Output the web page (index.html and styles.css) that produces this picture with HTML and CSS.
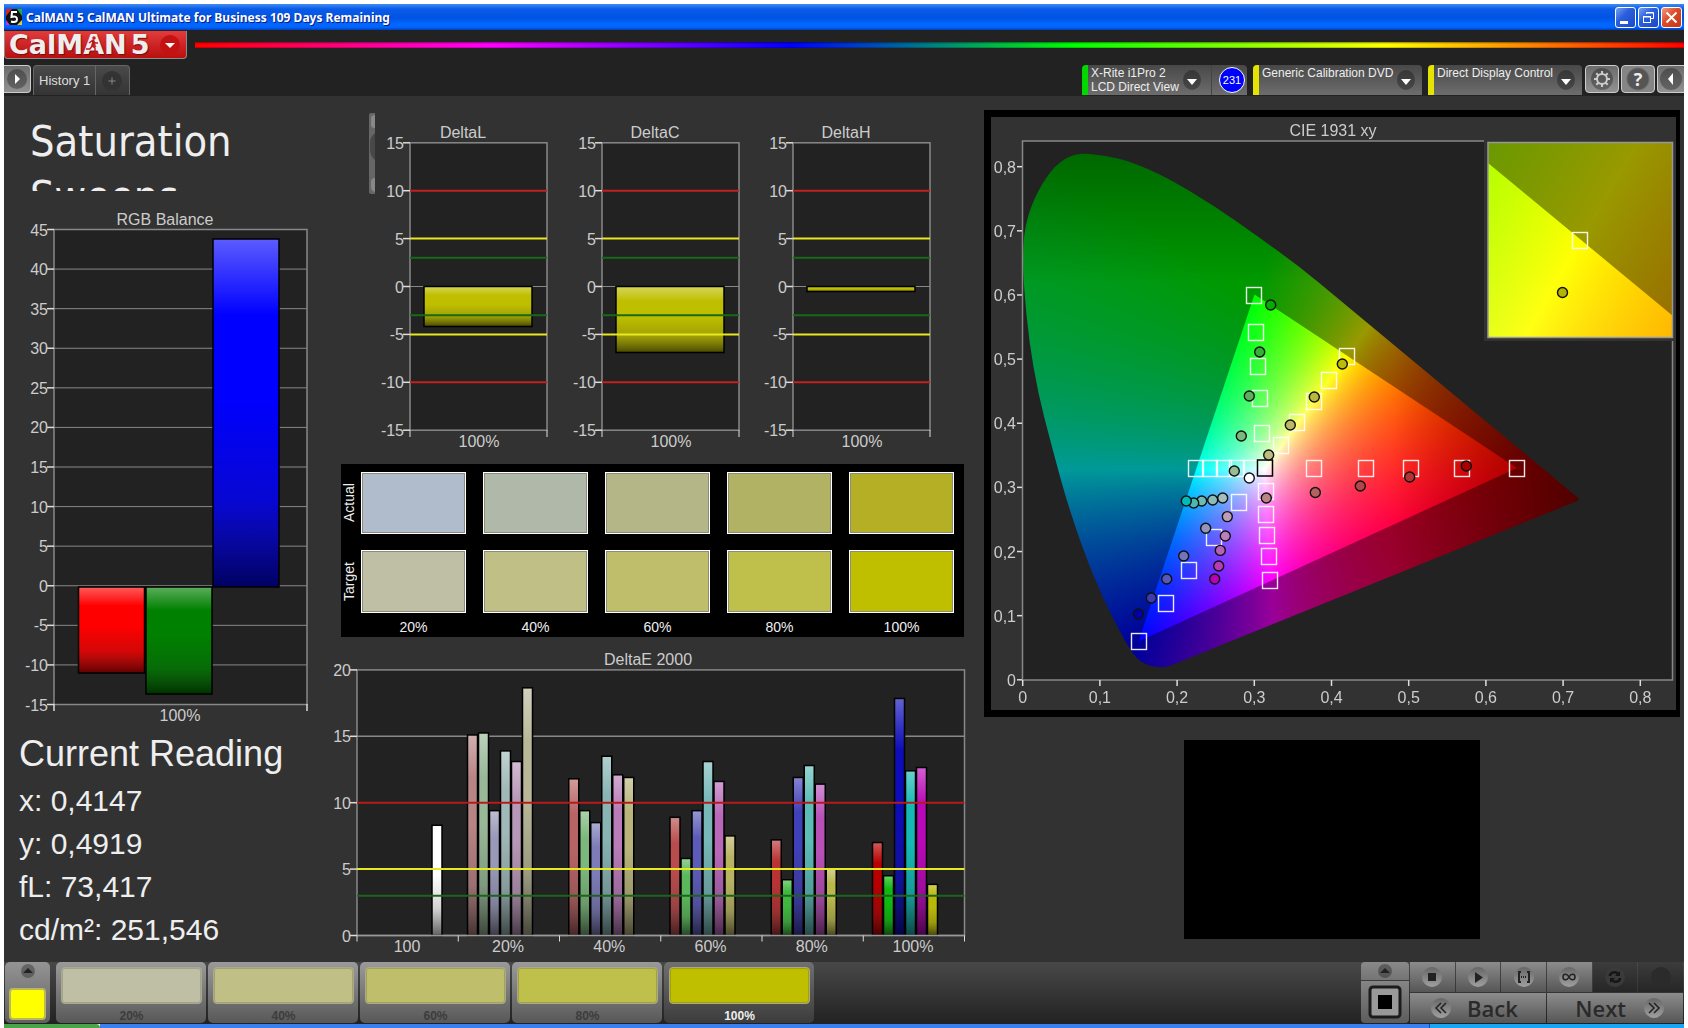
FILE: index.html
```html
<!DOCTYPE html>
<html lang="en">
<head>
<meta charset="utf-8">
<title>CalMAN 5</title>
<link rel="stylesheet" href="styles.css">
</head>
<body>
<div class="app">
  <header class="titlebar">
    <svg class="app-icon" width="16" height="16" viewBox="0 0 16 16" aria-hidden="true">
      <rect width="16" height="16" fill="#111"/>
      <path d="M0 0h6L0 7z" fill="#d22"/><path d="M16 0v7L11 0z" fill="#2a4"/><path d="M0 16v-5l4 5z" fill="#c3c"/><path d="M16 16h-5l5-5z" fill="#dc3"/>
      <path d="M11 3H6L5.500 8c4-1 5.500 0 5.500 2.500S8 13.500 5 12.500" fill="none" stroke="#fff" stroke-width="2"/>
    </svg>
    <h1 class="window-title">CalMAN 5 CalMAN Ultimate for Business 109 Days Remaining</h1>
    <div class="window-buttons">
      <button class="win-btn" aria-label="Minimize"><svg width="19" height="19" viewBox="0 0 19 19"><rect x="4" y="13" width="8" height="3" fill="#fff"/></svg></button>
      <button class="win-btn" aria-label="Restore"><svg width="19" height="19" viewBox="0 0 19 19" fill="none" stroke="#fff"><path d="M7.500 6V4.500h7v6H12M7.500 5h7"/><rect x="4.500" y="8.500" width="7" height="6"/><path d="M4 9h8"/></svg></button>
      <button class="win-btn close" aria-label="Close"><svg width="19" height="19" viewBox="0 0 19 19" stroke="#fff" stroke-width="2"><path d="M4.500 4.500l10 10M14.500 4.500l-10 10"/></svg></button>
    </div>
  </header>

  <div class="brandbar">
    <button class="logo" aria-label="CalMAN 5 menu">
      <span class="logo-text">CalMAN</span><span class="logo-text">5</span>
      <svg class="runner" width="16" height="18" viewBox="0 0 16 18" fill="none" stroke="#c11b1b" stroke-width="1.500" aria-hidden="true"><circle cx="9" cy="3" r="1" fill="#c11b1b"/><path d="M4 8l4-3 2 3 3 0M8 6l-1 5 3 2 0 4M7 11l-2 3-4 0"/></svg>
      <svg width="22" height="22" viewBox="0 0 22 22" aria-hidden="true"><circle cx="11" cy="11" r="10" fill="#c41212"/><path d="M6 9h10l-5 5z" fill="#fff"/></svg>
    </button>
    <div class="rainbow"></div>
  </div>

  <nav class="tabbar">
    <button class="square-btn left-edge" aria-label="Expand"><svg width="22" height="22" viewBox="0 0 22 22"><circle cx="11" cy="11" r="10" class="knob"/><path d="M9 6v10l5-5z" fill="#fff"/></svg></button>
    <div class="history">
      <button class="tab">History 1</button>
      <button class="tab add" aria-label="Add history"><svg width="20" height="20" viewBox="0 0 20 20"><circle cx="10" cy="10" r="10" fill="#333"/><path d="M6.500 10h7M10 6.500v7" stroke="#888"/></svg></button>
    </div>
    <div class="devices">
      <div class="device meter">
        <button class="device-main">X-Rite i1Pro 2<br>LCD Direct View</button>
        <svg class="arrow meter-arrow" width="18" height="20" viewBox="0 0 18 20"><ellipse cx="9" cy="10" rx="9" ry="10" class="knob"/><path d="M4 9h10l-5 6z" fill="#fff"/></svg>
        <span class="badge">231</span>
      </div>
      <div class="device source">
        <select aria-label="Source"><option>Generic Calibration DVD</option></select>
        <svg class="arrow" width="18" height="20" viewBox="0 0 18 20"><ellipse cx="9" cy="10" rx="9" ry="10" class="knob"/><path d="M4 9h10l-5 6z" fill="#fff"/></svg>
      </div>
      <div class="device display">
        <select aria-label="Display"><option>Direct Display Control</option></select>
        <svg class="arrow" width="18" height="20" viewBox="0 0 18 20"><ellipse cx="9" cy="10" rx="9" ry="10" class="knob"/><path d="M4 9h10l-5 6z" fill="#fff"/></svg>
      </div>
      <button class="square-btn" aria-label="Settings"><svg width="24" height="24" viewBox="0 0 24 24"><circle cx="12" cy="12" r="11" class="knob"/><circle cx="12" cy="12" r="5" fill="none" stroke="#ccc" stroke-width="2"/><path d="M12 4v3M12 17v3M4 12h3M17 12h3M6.300 6.300l2.200 2.200M15.500 15.500l2.200 2.200M17.700 6.300l-2.200 2.200M8.500 15.500l-2.200 2.200" stroke="#ccc" stroke-width="2"/></svg></button>
      <button class="square-btn help" aria-label="Help">?</button>
      <button class="square-btn right-edge" aria-label="Collapse"><svg width="24" height="24" viewBox="0 0 24 24"><circle cx="12" cy="12" r="11" class="knob"/><path d="M14 6v12l-5-6z" fill="#fff"/></svg></button>
    </div>
  </nav>

  <main class="workspace">
    <section class="col">
      <div class="heading-box"><h2 class="page-heading">Saturation Sweeps</h2></div>
      <svg id="rgb" class="chart" viewBox="4 200 336 532" role="img" aria-label="RGB Balance"></svg>
      <div class="reading">
        <h3>Current Reading</h3>
        <p>x: 0,4147</p>
        <p>y: 0,4919</p>
        <p>fL: 73,417</p>
        <p>cd/m²: 251,546</p>
      </div>
    </section>

    <section class="col">
      <svg id="deltas" class="chart" viewBox="340 96 640 368" role="img" aria-label="DeltaL, DeltaC, DeltaH"></svg>
      <div class="swatches">
        <div class="swatch-side">Actual</div>
        <div class="swatch" style="background:#b0bccc"></div>
        <div class="swatch" style="background:#b0b9a9"></div>
        <div class="swatch" style="background:#b4b688"></div>
        <div class="swatch" style="background:#b2b265"></div>
        <div class="swatch" style="background:#b5af26"></div>
        <div class="swatch-side">Target</div>
        <div class="swatch" style="background:#bfbfa6"></div>
        <div class="swatch" style="background:#bfbf86"></div>
        <div class="swatch" style="background:#bebe6b"></div>
        <div class="swatch" style="background:#bfbf4c"></div>
        <div class="swatch" style="background:#bfbf00"></div>
        <span></span>
        <span class="swatch-label">20%</span><span class="swatch-label">40%</span><span class="swatch-label">60%</span><span class="swatch-label">80%</span><span class="swatch-label">100%</span>
      </div>
      <svg id="deltae" class="chart" viewBox="340 637 640 325" role="img" aria-label="DeltaE 2000"></svg>
    </section>

    <section class="col">
      <div class="cie">
        <canvas id="cie-color" width="704" height="644"></canvas>
        <svg id="cie" class="chart overlay" viewBox="980 96 704 644" role="img" aria-label="CIE 1931 xy"></svg>
      </div>
      <div class="preview"></div>
    </section>
  </main>

  <footer class="bottombar">
    <button class="pattern-btn" aria-label="Pattern">
      <svg width="16" height="16" viewBox="0 0 16 16"><circle cx="8" cy="8" r="7" class="knob"/><path d="M3 10l5-5 5 5z" fill="#222"/></svg>
      <span class="pattern-color"></span>
    </button>
    <div class="slots">
      <button class="slot"><span class="slot-color" style="background:#bfbfa6"></span>20%</button>
      <button class="slot"><span class="slot-color" style="background:#bfbf86"></span>40%</button>
      <button class="slot"><span class="slot-color" style="background:#bfbf6b"></span>60%</button>
      <button class="slot"><span class="slot-color" style="background:#bfbf4c"></span>80%</button>
      <button class="slot selected"><span class="slot-color" style="background:#bfbf00"></span>100%</button>
    </div>
    <div class="transport">
      <div class="window-pattern">
        <button class="wp-top" aria-label="Raise"><svg width="16" height="16" viewBox="0 0 16 16"><circle cx="8" cy="8" r="7" class="knob"/><path d="M3 10l5-5 5 5z" fill="#222"/></svg></button>
        <button class="wp-main" aria-label="Window pattern"><svg width="34" height="34" viewBox="0 0 34 34"><rect x="2" y="2" width="30" height="30" rx="3" fill="#999" stroke="#1c1c1c" stroke-width="3"/><rect x="10" y="10" width="14" height="14" fill="#000"/></svg></button>
      </div>
      <div class="controls">
        <button class="ctl" aria-label="Stop"><svg width="22" height="22" viewBox="0 0 22 22"><circle cx="11" cy="11" r="10" class="glow"/><rect x="7" y="7" width="8" height="8" fill="#222"/></svg></button>
        <button class="ctl" aria-label="Play"><svg width="22" height="22" viewBox="0 0 22 22"><circle cx="11" cy="11" r="10" class="glow"/><path d="M8 6v11l8-5.500z" fill="#222"/></svg></button>
        <button class="ctl" aria-label="Read series"><svg width="22" height="22" viewBox="0 0 22 22"><circle cx="11" cy="11" r="10" class="glow"/><path d="M8 6H6v10h2M14 6h2v10h-2" fill="none" stroke="#222" stroke-width="2"/><path d="M8 11h6" stroke="#222" stroke-width="2" stroke-dasharray="1 1"/></svg></button>
        <button class="ctl" aria-label="Read continuous"><svg width="22" height="22" viewBox="0 0 22 22"><circle cx="11" cy="11" r="10" class="glow"/><path d="M11 11c-2-4-6-3.500-6 0s4 4 6 0c2-4 6-3.500 6 0s-4 4-6 0z" fill="none" stroke="#222" stroke-width="1.500"/></svg></button>
        <button class="ctl dark" aria-label="Refresh"><svg width="22" height="22" viewBox="0 0 22 22"><circle cx="11" cy="11" r="10" fill="#3a3a3a"/><path d="M6 10c0-4 6-5 8-2M16 12c0 4-6 5-8 2" fill="none" stroke="#161616" stroke-width="2.500"/><path d="M16 5v5h-5zM6 17v-5h5z" fill="#161616"/></svg></button>
        <button class="ctl dark" aria-label="Record"><svg width="22" height="22" viewBox="0 0 22 22"><circle cx="11" cy="11" r="10" fill="#2b2b2b"/></svg></button>
        <button class="nav-btn"><svg width="22" height="22" viewBox="0 0 22 22"><circle cx="11" cy="11" r="10" class="glow"/><path d="M11 6l-5 5 5 5M16 6l-5 5 5 5" fill="none" stroke="#222" stroke-width="1.500"/></svg><span>Back</span></button>
        <button class="nav-btn next"><span>Next</span><svg width="22" height="22" viewBox="0 0 22 22"><circle cx="11" cy="11" r="10" class="glow"/><path d="M6 6l5 5-5 5M11 6l5 5-5 5" fill="none" stroke="#222" stroke-width="1.500"/></svg></button>
      </div>
    </div>
  </footer>
  <div class="taskbar"><span class="start"></span><span class="tasks"></span><span class="tray"></span></div>
</div>
<svg width="0" height="0" class="defs" aria-hidden="true">
  <defs>
    <linearGradient id="shade" x1="0" y1="0" x2="0" y2="1">
      <stop offset="0" stop-color="#fff" stop-opacity=".36"/>
      <stop offset=".22" stop-color="#fff" stop-opacity="0"/>
      <stop offset=".45" stop-color="#222" stop-opacity="0"/>
      <stop offset=".75" stop-color="#222" stop-opacity=".2"/>
      <stop offset="1" stop-color="#000" stop-opacity=".62"/>
    </linearGradient>
    <linearGradient id="knob-light" x1="0" y1="0" x2="0" y2="1">
      <stop offset="0" stop-color="#666"/>
      <stop offset="1" stop-color="#a0a0a0"/>
    </linearGradient>
  </defs>
</svg>
<script src="charts.js"></script>
</body>
</html>
```
FILE: styles.css
```css
* { box-sizing: border-box; }
body { margin: 0; background: #fff; font-family: "Liberation Sans", Arial, sans-serif; color: #eee; }
button, select { font-family: inherit; border: 0; margin: 0; padding: 0; color: inherit; cursor: pointer; }
h1, h2, h3, p { margin: 0; font-weight: normal; }
svg { display: block; flex: none; }
.defs { position: absolute; }
.knob { fill: #000; fill-opacity: .3; }
.glow { fill: url(#knob-light); }

.app { display: flex; flex-direction: column; min-height: 100vh; padding: 4px 4px 0; }

.titlebar { display: flex; align-items: center; height: 26px; padding: 0 2px; gap: 4px;
  background: linear-gradient(#3f8cf3 0, #0a5be8 5px, #0054e3 14px, #0066ff 20px, #0066ff 23px, #0040c0 26px); }
.window-title { flex: 1; font: bold 12px "Noto Sans", sans-serif; color: #fff; text-shadow: 1px 1px #0a1883; }
.window-buttons { display: flex; gap: 2px; }
.win-btn { width: 21px; height: 21px; border: 1px solid #fff; border-radius: 3px; background: linear-gradient(135deg, #7ba2f0, #2a5fdc 40%, #1c49c8); }
.win-btn.close { background: linear-gradient(135deg, #ee9a84, #dc4a26 45%, #c3371a); }

.brandbar { display: flex; align-items: flex-start; gap: 8px; height: 35px; padding-top: 1px; background: #222; }
.logo { display: flex; align-items: center; gap: 4px; width: 183px; height: 28px; padding: 0 4px; overflow: hidden; position: relative;
  border: 1px solid #8b8b8b; border-top: 0; border-radius: 0 0 4px 4px; background: linear-gradient(#e23b3b, #b80f0f); }
.logo-text { font: bold 27px/26px "DejaVu Sans", sans-serif; color: #eee; text-shadow: 1px 1px 1px #701010; }
.runner { position: absolute; left: 80px; top: 4px; }
.logo svg:last-child { margin-left: 6px; }
.rainbow { flex: 1; height: 6px; margin-top: 11px;
  background: linear-gradient(rgba(0,0,0,.45) 0, rgba(0,0,0,0) 2px 5px, rgba(0,0,0,.4) 6px),
  linear-gradient(90deg, #f00, #f0f 20%, #00f 40%, #0f0 59%, #ff0 80%, #f00); }

.tabbar { display: flex; align-items: flex-start; height: 31px; background: #222; }
.square-btn { display: flex; align-items: center; justify-content: center; width: 34px; height: 28px; border: 1px solid #ccc; border-radius: 4px; background: linear-gradient(#6c6c6c, #929292); }
.left-edge { width: 27px; border-left: 0; border-radius: 0 4px 4px 0; }
.right-edge { width: 27px; border-right: 0; border-radius: 4px 0 0 4px; }
.help { font: bold 18px "Open Sans", sans-serif; color: #eee; background: radial-gradient(circle, #555 10px, #858585 12px); }
.history { display: flex; margin-left: 2px; height: 30px; border: 1px solid #666; border-bottom: 0; border-radius: 4px 4px 0 0; background: linear-gradient(#4a4a4a, #343434); }
.tab { padding: 0 5px; background: none; font-size: 13px; color: #ddd; }
.tab.add { width: 34px; padding-left: 6px; border-left: 1px solid #666; }
.devices { display: flex; align-items: flex-start; gap: 2px; margin-left: auto; }
.device { position: relative; display: flex; height: 30px; margin-right: 4px; border-left: 6px solid #e4e400; border-radius: 4px 4px 0 0; background: linear-gradient(#484848, #6d6d6d); }
.device.meter { width: 165px; border-left-color: #00d800; }
.device.source { width: 169px; }
.device.display { width: 154px; margin-right: 1px; }
.device-main { width: 124px; padding: 1px 3px; border-right: 1px solid #444; background: none; text-align: left; font-size: 12px; line-height: 14px; }
.device select { flex: 1; appearance: none; padding: 0 0 13px 3px; background: none; font-size: 12px; line-height: 17px; }
.arrow { position: absolute; right: 7px; top: 5px; pointer-events: none; }
.meter-arrow { right: 46px; }
.badge { width: 26px; height: 26px; margin: 2px 0 0 7px; border: 1px solid #fff; border-radius: 50%; background: #00f; color: #fff; font-size: 11px; line-height: 24px; text-align: center; }

.workspace { flex: 1; display: grid; grid-template-columns: 336fr 640fr 704fr; background: #323232; }
.col { display: flex; flex-direction: column; min-width: 0; }
.chart { width: 100%; height: auto; overflow: visible; font-size: 16px; fill: #ccc; }
.heading-box { height: 95px; margin-bottom: 9px; padding: 18px 60px 0 26px; overflow: hidden; }
.page-heading { font: 43px/55px "DejaVu Sans Condensed", "DejaVu Sans", sans-serif; font-stretch: condensed; color: #eee; }
.reading { padding: 0 15px; }
.reading h3 { margin-bottom: 4px; font-size: 36px; line-height: 43px; }
.reading p { font-size: 30px; line-height: 43px; }

.swatches { display: grid; grid-template-columns: 3px repeat(5, 1fr); grid-template-rows: 62px 63px 16px; gap: 16px 17px;
  height: 173px; margin: 0 16px 0 1px; padding: 8px 10px 0 0; background: #000; }
.swatch { border: 1px solid #fff; box-shadow: inset 0 0 0 1px #8c8c78; }
.swatch-side { width: 16px; writing-mode: vertical-rl; transform: rotate(180deg); text-align: center; font-size: 14px; line-height: 16px; }
.swatch-label { margin-top: -10px; text-align: center; font-size: 14px; line-height: 16px; }

.cie { position: relative; }
.cie canvas { display: block; width: 100%; height: auto; }
.overlay { position: absolute; left: 0; top: 0; }
.preview { width: 42%; aspect-ratio: 296 / 199; margin-left: 29%; background: #000; }

.bottombar { display: flex; align-items: stretch; height: 62px; padding: 0 1px 1px; background: linear-gradient(#484848, #222); color: #3c3c3c; }
.pattern-btn { display: flex; flex-direction: column; align-items: center; gap: 9px; width: 45px; padding-top: 1px; border-radius: 5px; background: linear-gradient(#949494, #606060); }
.pattern-color { width: 37px; height: 32px; border: 2px solid #b9b95a; border-radius: 4px; background: #ff0; }
.slots { display: flex; gap: 2px; margin-left: 6px; }
.slot { display: flex; flex-direction: column; gap: 5px; width: 150px; padding: 5px 4px 0 5px; border-radius: 5px; background: linear-gradient(#9a9a9a, #585858); font-size: 12px; font-weight: bold; line-height: 14px; }
.slot-color { align-self: stretch; height: 37px; border: 1px solid #aaa98c; border-radius: 4px; box-shadow: inset 0 0 0 1px rgba(0,0,0,.15); }
.slot.selected { background: linear-gradient(#707070, #3c3c3c); color: #eee; }
.transport { display: flex; gap: 1px; margin-left: auto; }
.window-pattern { display: flex; flex-direction: column; gap: 1px; width: 48px; }
.window-pattern button { display: flex; align-items: center; justify-content: center; }
.wp-top { height: 18px; border-radius: 4px 4px 0 0; background: linear-gradient(#8a8a8a, #747474); }
.wp-main { flex: 1; border-radius: 0 0 4px 4px; background: linear-gradient(#858585, #5c5c5c); }
.controls { display: grid; grid-template-columns: repeat(6, 1fr); grid-template-rows: 30px 30px; gap: 1px; width: 273px; }
.ctl { display: flex; align-items: center; justify-content: center; background: linear-gradient(#8c8c8c, #565656); }
.ctl.dark { background: linear-gradient(#3c3c3c, #262626); }
.nav-btn { grid-column: span 3; display: flex; align-items: center; gap: 15px; padding: 0 20px; background: linear-gradient(#8c8c8c, #565656); font: 600 22px/28px "Open Sans", sans-serif; color: #2a2a2a; }
.nav-btn.next { justify-content: flex-end; padding-right: 18px; gap: 17px; }

.taskbar { display: flex; height: 4px; }
.start { width: 96px; background: #4aa54a; border-radius: 0 4px 0 0; }
.tasks { flex: 1; background: #3a80ee; }
.tray { width: 255px; background: #1aa4f4; border-left: 1px solid #0b4fb8; }
```
FILE: charts.js
```js
const NS = 'http://www.w3.org/2000/svg';

function add(parent, tag, attrs, text) {
  const el = document.createElementNS(NS, tag);
  for (const k in attrs) el.setAttribute(k, attrs[k]);
  if (text !== undefined) el.textContent = text;
  parent.appendChild(el);
  return el;
}
function label(svg, x, y, text, anchor = 'middle') {
  add(svg, 'text', { x, y, 'text-anchor': anchor }, text);
}
function line(svg, x1, y1, x2, y2, stroke, width = 1) {
  add(svg, 'line', { x1, y1, x2, y2, stroke, 'stroke-width': width });
}
function bar(svg, x, y, w, h, color) {
  add(svg, 'rect', { x, y, width: w, height: h, fill: color });
  add(svg, 'rect', { x, y, width: w, height: h, fill: 'url(#shade)', stroke: '#000', 'stroke-width': 1.5 });
}
function plot(svg, x, y, w, h) {
  add(svg, 'rect', { x, y, width: w, height: h, fill: '#222', stroke: '#888', 'stroke-width': 1.5 });
}

/* RGB balance */
{
  const s = document.getElementById('rgb');
  const x0 = 54, x1 = 307, top = 229.5, unit = 475 / 60;
  label(s, 165, 225, 'RGB Balance');
  plot(s, x0, top, x1 - x0, 475);
  for (let v = 45; v >= -15; v -= 5) {
    const y = top + (45 - v) * unit;
    line(s, x0, y, x1, y, '#888');
    line(s, 47, y, x0, y, '#ddd', 1.5);
    label(s, 48, y + 6, v, 'end');
  }
  line(s, x0, 704, x0, 711, '#ddd', 1.5);
  line(s, x1, 704, x1, 711, '#ddd', 1.5);
  label(s, 180, 721, '100%');
  bar(s, 78.5, 587, 66, 86, '#ff0000');
  bar(s, 146, 587, 66, 107, '#008000');
  bar(s, 213, 239, 66, 348, '#0000ff');
}

/* DeltaL, DeltaC, DeltaH */
{
  const s = document.getElementById('deltas');
  const scroll = add(s, 'g', {});
  add(scroll, 'path', { d: 'M375 113h-4q-2 0-2 2v77q0 2 2 2h4z', fill: '#666' });
  add(scroll, 'path', { d: 'M375 115q-4 0-4 4v6q0 3 4 3zM375 178q-4 0-4 4v5q0 4 4 5z', fill: '#888' });
  add(scroll, 'path', { d: 'M375 133q-5 4-5 10v7q0 6 5 10z', fill: '#484848' });
  const limits = [[10, '#c32020'], [5, '#e8e820'], [3, '#176a17'], [-3, '#176a17'], [-5, '#e8e820'], [-10, '#c32020']];
  [['DeltaL', 410, 40], ['DeltaC', 602, 66], ['DeltaH', 793, 5]].forEach(([name, x, h]) => {
    const y = v => 286.5 - v * 9.58;
    label(s, x + 53, 138, name);
    plot(s, x, y(15), 137, 287.4);
    line(s, x, y(0), x + 137, y(0), '#888');
    for (let v = 15; v >= -15; v -= 5) {
      line(s, x - 7, y(v), x, y(v), '#ddd', 1.5);
      label(s, x - 6, y(v) + 6, v, 'end');
    }
    bar(s, x + 14, 286.5, 108, h, '#bfbf00');
    limits.forEach(([v, c]) => line(s, x, y(v), x + 137, y(v), c, 2));
    line(s, x, 430, x, 437, '#ddd');
    line(s, x + 137, 430, x + 137, 437, '#ddd');
    label(s, x + 69, 447, '100%');
  });
}

/* DeltaE 2000 */
{
  const s = document.getElementById('deltae');
  const base = 935.5, unit = 13.28, x0 = 357, step = 101.25;
  label(s, 648, 665, 'DeltaE 2000');
  plot(s, x0, base - 20 * unit, 607.5, 20 * unit);
  line(s, x0, base - 15 * unit, 964.5, base - 15 * unit, '#888', 1.5);
  const groups = [
    ['20%', [15.1, 15.25, 9.4, 13.9, 13.1, 18.65], ['#b88484', '#98b898', '#9898b8', '#a0b8b8', '#b898b8', '#b8b898']],
    ['40%', [11.8, 9.4, 8.5, 13.5, 12.1, 11.9], ['#b86464', '#7cb87c', '#7c7cb8', '#88b4b4', '#b87cb8', '#b8b47c']],
    ['60%', [8.9, 5.8, 9.4, 13.1, 11.6, 7.5], ['#b84c4c', '#5cb85c', '#5c5cb8', '#78b8b8', '#b868b8', '#b8b464']],
    ['80%', [7.2, 4.2, 11.9, 12.8, 11.4, 5], ['#b83434', '#40b840', '#4040b8', '#5cbcb8', '#b850b8', '#b8b84c']],
    ['100%', [7, 4.5, 17.85, 12.4, 12.65, 3.85], ['#b80000', '#10b810', '#0c0cb8', '#14b8b4', '#b808b8', '#b8b808']]
  ];
  bar(s, 432, base - 8.3 * unit, 10, 8.3 * unit, '#ffffff');
  label(s, 407, 952, '100');
  groups.forEach(([name, values, colors], g) => {
    values.forEach((v, i) => bar(s, 467.5 + g * step + i * 11, base - v * unit, 10, v * unit, colors[i]));
    label(s, 508 + g * step, 952, name);
  });
  line(s, x0, base - 10 * unit, 964.5, base - 10 * unit, '#b41c1c', 2);
  line(s, x0, base - 5 * unit, 964.5, base - 5 * unit, '#e8e820', 2);
  line(s, x0, base - 3 * unit, 964.5, base - 3 * unit, '#1c641c', 2);
  line(s, x0, base, 964.5, base, '#999', 1.5);
  for (let i = 0; i <= 6; i++) line(s, x0 + i * step, base, x0 + i * step, base + 6, '#ddd');
  for (let v = 0; v <= 20; v += 5) {
    line(s, x0 - 7, base - v * unit, x0, base - v * unit, '#ddd', 1.5);
    label(s, x0 - 6, base - v * unit + 6, v, 'end');
  }
}

/* CIE 1931 xy */
const CIE = { x0: 1022.7, y0: 679.8, sx: 772, sy: 641.4 };
function chroma(x, y, dark) {
  const X = x / y, Z = (1 - x - y) / y;
  let r = 3.2406 * X - 1.5372 - 0.4986 * Z;
  let g = -0.9689 * X + 1.8758 + 0.0415 * Z;
  let b = 0.0557 * X - 0.2040 + 1.0570 * Z;
  r = Math.max(r, 0); g = Math.max(g, 0); b = Math.max(b, 0);
  const m = Math.max(r, g, b) || 1;
  let k = 255 * (dark ? 0.6 : 1);
  if (x > 0.48) k *= Math.max(0.5, 1 - (x - 0.48) * 2);
  if (y > 0.62) k *= Math.max(0.65, 1 - (y - 0.62) * 1.6);
  return [r / m * k, g / m * k, b / m * k];
}
function colorField(w, h, toXY, dark) {
  const c = document.createElement('canvas');
  c.width = w; c.height = h;
  const ctx = c.getContext('2d'), img = ctx.createImageData(w, h);
  for (let j = 0, p = 0; j < h; j++) for (let i = 0; i < w; i++, p += 4) {
    const [x, y] = toXY(i, j);
    const q = chroma(x, Math.max(y, 0.001), dark);
    img.data[p] = q[0]; img.data[p + 1] = q[1]; img.data[p + 2] = q[2]; img.data[p + 3] = 255;
  }
  ctx.putImageData(img, 0, 0);
  return c;
}
{
  const ctx = document.getElementById('cie-color').getContext('2d');
  const rect = (x, y, w, h, c) => { ctx.fillStyle = c; ctx.fillRect(x, y, w, h); };
  ctx.translate(-980, -96);
  rect(984, 110, 696, 607, '#000');
  rect(991, 117, 685, 593, '#323232');
  rect(1022, 141, 651, 539, '#222');
  const toXY = (i, j) => [(i + 980 - CIE.x0) / CIE.sx, (CIE.y0 - j - 96) / CIE.sy];
  const locus = [[1144, 666], [1128, 648], [1095, 582], [1068.5, 508], [1050.5, 441.5], [1038, 393], [1029, 341], [1024, 289], [1022.500, 252], [1026, 220], [1038, 190], [1055, 165], [1075, 153], [1104, 155], [1132, 162], [1167, 177.5], [1213, 205], [1258, 236.6], [1300, 266.7], [1338, 299]];
  ctx.save();
  ctx.beginPath();
  ctx.moveTo(1158, 667);
  for (let i = 0; i < locus.length - 1; i++) {
    const [a, b] = locus[i], [c, d] = locus[i + 1];
    ctx.quadraticCurveTo(a, b, (a + c) / 2, (b + d) / 2);
  }
  ctx.lineTo(1577, 497);
  ctx.quadraticCurveTo(1580, 499, 1577, 501);
  ctx.lineTo(1172, 665);
  ctx.quadraticCurveTo(1164, 668, 1158, 667);
  ctx.clip();
  ctx.drawImage(colorField(704, 644, toXY, true), 980, 96);
  ctx.restore();
  ctx.save();
  ctx.beginPath();
  ctx.moveTo(1254.5, 294.5); ctx.lineTo(1517, 468); ctx.lineTo(1138.5, 641.5);
  ctx.closePath(); ctx.clip();
  ctx.drawImage(colorField(704, 644, toXY, false), 980, 96);
  ctx.restore();

  /* magnified inset around the selected point */
  rect(1484, 138, 192, 203, '#323232');
  const zoomXY = (i, j) => [0.4193 + (i - 92) / 3750, 0.5053 - (j - 98) / 3930];
  ctx.drawImage(colorField(185, 196, zoomXY, true), 1488, 142);
  ctx.save();
  ctx.beginPath();
  ctx.moveTo(1488, 163); ctx.lineTo(1673, 316); ctx.lineTo(1673, 338); ctx.lineTo(1488, 338);
  ctx.closePath(); ctx.clip();
  ctx.drawImage(colorField(185, 196, zoomXY, false), 1488, 142);
  ctx.restore();

  const s = document.getElementById('cie');
  label(s, 1333, 136, 'CIE 1931 xy');
  add(s, 'path', { d: 'M1484 141H1022.500V680H1672.500V341', fill: 'none', stroke: '#888', 'stroke-width': 1.5 });
  add(s, 'rect', { x: 1488, y: 142.5, width: 184.5, height: 195, fill: 'none', stroke: '#999', 'stroke-width': 1.5 });
  for (let i = 0; i <= 8; i++) {
    const t = i ? '0,' + i : '0', x = CIE.x0 + i * 77.2, y = CIE.y0 - i * 64.14;
    line(s, 1017, y, 1022, y, '#ddd', 1.5);
    label(s, 1016, y + 6, t, 'end');
    line(s, x, 680, x, 686, '#ddd', 1.5);
    label(s, x, 703, t);
  }
  const targets = [[1254, 295], [1256, 332], [1258, 366], [1260, 398], [1262, 433], [1281, 445], [1297, 422], [1314, 401], [1329, 380], [1347, 356], [1314, 468], [1366, 468], [1411, 468], [1462, 468], [1517, 468], [1196, 468], [1210, 468], [1224, 468], [1237, 468], [1251, 468], [1266, 491], [1266, 514], [1267, 535], [1269, 556], [1270, 580], [1239, 502], [1214, 537], [1189, 570], [1166, 603], [1139, 641], [1580, 240]];
  targets.forEach(([x, y]) => add(s, 'rect', { x: x - 7.5, y: y - 7.5, width: 15, height: 16, fill: 'none', stroke: '#fff', 'stroke-width': 1.4, 'stroke-opacity': .9 }));
  add(s, 'rect', { x: 1257.5, y: 460, width: 15, height: 16, fill: 'none', stroke: '#000', 'stroke-width': 1.5 });
  const readings = [[1270.7, 305, '#00b000'], [1259.7, 352, '#38b038'], [1249.3, 396, '#5cb05c'], [1241.3, 436, '#7cb87c'], [1234.3, 471, '#98bc94'], [1268.7, 455, '#bcbc80'], [1290.3, 425, '#bcb868'], [1314.3, 397, '#b8b840'], [1342.3, 364, '#bcbc08'], [1249.3, 478, '#fff'], [1266.3, 498, '#b88484'], [1315.3, 492.5, '#b86060'], [1360.3, 486, '#b04848'], [1409.7, 477, '#b03434'], [1466.3, 466, '#a80000'],
    [1222.7, 498, '#a4bcbc'], [1212.7, 500, '#8cbcb8'], [1201.7, 501, '#70bcb4'], [1193.7, 503, '#48b8b0'], [1186.3, 501, '#00bcb8'], [1227.3, 516.6, '#bc9cb8'], [1225.3, 536, '#bc80b8'], [1220.3, 550.4, '#b860b4'], [1218.7, 566, '#b83cb4'], [1214.7, 579, '#b800b4'], [1205.7, 528.3, '#9494bc'], [1183.7, 556, '#7474b8'], [1166.7, 579, '#5858b8'], [1151.3, 598, '#3c3cb0'], [1138.3, 614, '#0000a4'], [1562.5, 292.5, '#b4b400']];
  readings.forEach(([cx, cy, fill]) => add(s, 'circle', { cx, cy, r: 5, fill, stroke: '#111', 'stroke-width': 1.4 }));
}
```
